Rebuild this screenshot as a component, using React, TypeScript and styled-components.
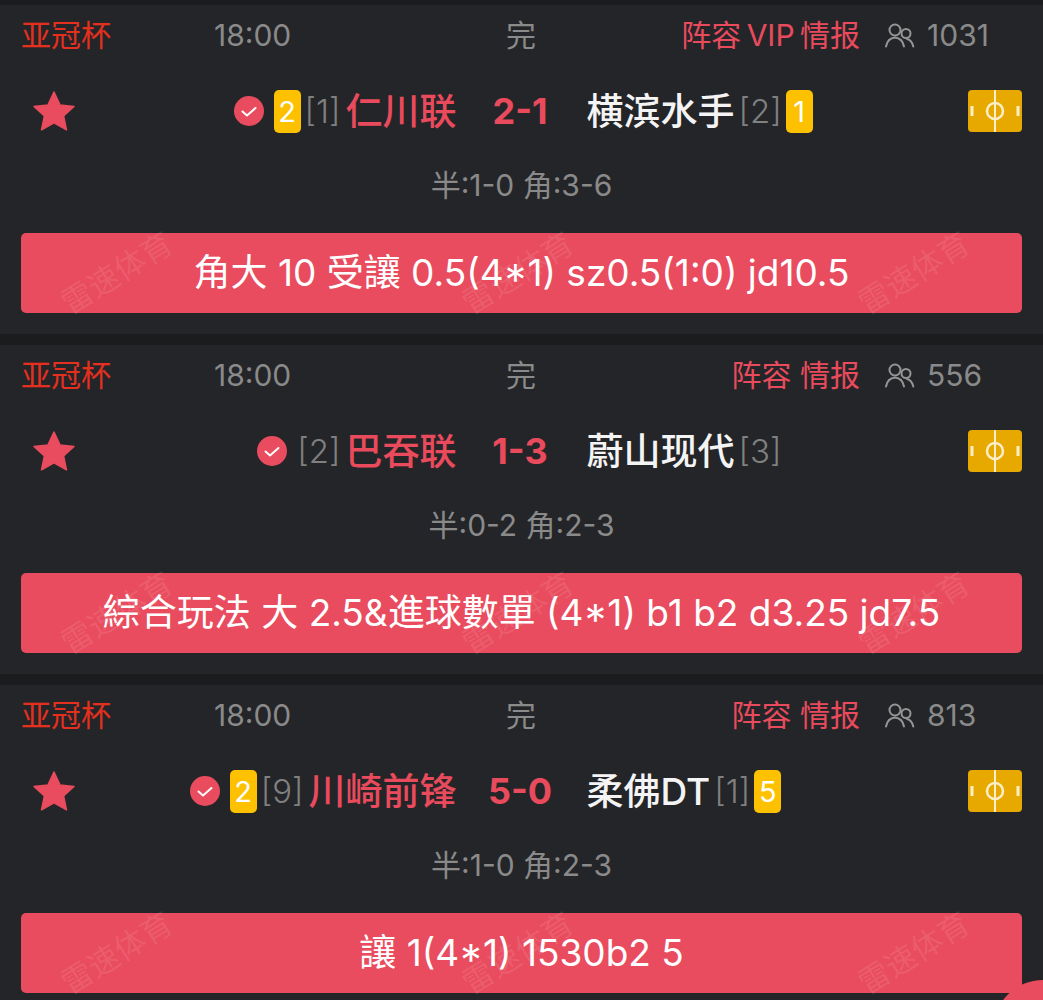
// Match list: finished games with a tip banner under each one

import React from 'react';
import styled, { createGlobalStyle } from 'styled-components';

const GlobalStyle = createGlobalStyle`
  html, body {
    margin: 0;
    height: 1000px;
    overflow: hidden;
    background: #1b1c1e;
  }
  body {
    font-family: "Inter", "Noto Sans CJK SC", sans-serif;
  }
`;

const Page = styled.div`
  display: flex;
  flex-direction: column;
  gap: 11px;
  padding-top: 5px;
`;

const Card = styled.section`
  height: 329px;
  box-sizing: border-box;
  background: #242528;
  padding: 0 21px;
  display: flex;
  flex-direction: column;
`;

const Header = styled.div`
  height: 60px;
  display: grid;
  grid-template-columns: 193px 292px 30px 1fr;
  align-items: center;
  font-size: 30px;
  color: #8a8a8a;
`;

const League = styled.span`
  color: #e5301f;
  padding-bottom: 5px;
`;

const Status = styled.span`
  text-align: center;
  white-space: nowrap;
  padding-bottom: 5px;
`;

const HeaderRight = styled.div`
  display: flex;
  align-items: center;
`;

const Links = styled.span<{ $tight: boolean }>`
  width: 324px;
  text-align: right;
  color: #e94b5d;
  white-space: nowrap;
  padding-bottom: 5px;
  word-spacing: ${(p) => (p.$tight ? '-3px' : '0')};
`;

const UsersSlot = styled.span`
  margin-left: 25px;
  display: flex;
`;

const Count = styled.span`
  margin-left: 12px;
`;

const MatchRow = styled.div`
  height: 92px;
  display: grid;
  grid-template-columns: 1fr 130px 1fr;
  align-items: center;
`;

const Side = styled.div`
  display: flex;
  align-items: center;
`;

const HomeName = styled.span`
  font-size: 37px;
  font-weight: 500;
  color: #e94b5d;
  white-space: nowrap;
  margin-left: 5px;
  padding-bottom: 5px;
`;

const AwayName = styled.span`
  font-size: 37px;
  font-weight: 500;
  color: #f4f4f4;
  white-space: nowrap;
  margin-right: 4px;
  padding-bottom: 5px;
`;

const Score = styled.div`
  text-align: center;
  font-size: 36px;
  font-weight: 700;
  color: #e94b5d;
  padding-right: 3px;
`;

const Rank = styled.span`
  font-size: 33px;
  font-weight: 300;
  color: #808080;
  white-space: nowrap;
  padding-bottom: 1px;
`;

const Badge = styled.span<{ $side: 'home' | 'away' }>`
  width: 27px;
  height: 43px;
  border-radius: 5px;
  background: #fdc100;
  color: #fff;
  font-size: 29px;
  display: flex;
  align-items: center;
  justify-content: center;
  margin-left: ${(p) => (p.$side === 'away' ? '4px' : '0')};
  margin-right: ${(p) => (p.$side === 'home' ? '4px' : '0')};
`;

const StarSlot = styled.span`
  margin-left: 12px;
  margin-right: auto;
  display: flex;
`;

const CheckSlot = styled.span`
  margin-right: 10px;
  display: flex;
`;

const PitchSlot = styled.span`
  margin-left: auto;
  display: flex;
`;

const HalfLine = styled.div`
  height: 56px;
  box-sizing: border-box;
  padding-bottom: 4px;
  display: flex;
  align-items: center;
  justify-content: center;
  font-size: 30px;
  color: #8a8a8a;
  white-space: nowrap;
`;

const TipBanner = styled.div`
  position: relative;
  margin-top: 20px;
  height: 80px;
  box-sizing: border-box;
  padding-bottom: 6px;
  border-radius: 5px;
  background: #e94c5e;
  color: #fff;
  font-size: 37px;
  display: flex;
  align-items: center;
  justify-content: center;
  white-space: nowrap;
`;

const Watermark = styled.span<{ $x: number }>`
  position: absolute;
  left: ${(p) => p.$x}px;
  top: 50%;
  font-size: 31px;
  line-height: 36px;
  color: rgba(255, 255, 255, 0.1);
  transform: translateY(-50%) rotate(-32deg);
  pointer-events: none;
`;

const CornerButton = styled.div`
  position: fixed;
  left: 993px;
  top: 980px;
  width: 100px;
  height: 100px;
  border-radius: 50%;
  background: #e94c5e;
`;

const StarIcon = () => (
  <svg width="42" height="40" viewBox="0 0 42 40">
    <path
      d="M21 1l6 12.9 14 1.6-10.4 9.5 2.9 13.8L21 31.8 8.5 38.8l2.9-13.8L1 15.5l14-1.6z"
      fill="#e94c5e"
      stroke="#e94c5e"
      strokeWidth="1.5"
      strokeLinejoin="round"
    />
  </svg>
);

const CheckIcon = () => (
  <svg width="30" height="30" viewBox="0 0 30 30">
    <circle cx="15" cy="15" r="15" fill="#e94c5e" />
    <path d="M8.5 15.5l4.5 4 8.5-7.5" fill="none" stroke="#fff" strokeWidth="2" strokeLinecap="round" strokeLinejoin="round" />
  </svg>
);

const UsersIcon = () => (
  <svg width="30" height="26" viewBox="0 0 30 26" fill="none" stroke="#959595" strokeWidth="2" strokeLinecap="round">
    <circle cx="10" cy="8" r="5.5" />
    <circle cx="21" cy="11.5" r="4.5" />
    <path d="M1 24.5C2 19 5 16 10 15.5c5 .5 8 3.5 9 9" />
    <path d="M22 17c3.5.8 5.5 3.7 6.3 7.5" />
  </svg>
);

const PitchIcon = () => (
  <svg width="54" height="42" viewBox="0 0 54 42">
    <rect width="54" height="42" rx="4" fill="#e7a900" />
    <path d="M27 0v42" stroke="#fbeec8" strokeWidth="2" />
    <circle cx="27" cy="21" r="8" fill="none" stroke="#fbeec8" strokeWidth="2.5" />
    <path d="M4 16v10M50 16v10" stroke="#fbeec8" strokeWidth="3" />
  </svg>
);

type Match = {
  links: string;
  count: number;
  home: string;
  homeRank: number;
  homeBadge?: number;
  away: string;
  awayRank: number;
  awayBadge?: number;
  score: string;
  half: string;
  tip: string;
};

const matches: Match[] = [
  {
    links: '阵容 VIP 情报',
    count: 1031,
    home: '仁川联',
    homeRank: 1,
    homeBadge: 2,
    away: '横滨水手',
    awayRank: 2,
    awayBadge: 1,
    score: '2-1',
    half: '半:1-0 角:3-6',
    tip: '角大 10 受讓 0.5(4*1) sz0.5(1:0) jd10.5',
  },
  {
    links: '阵容 情报',
    count: 556,
    home: '巴吞联',
    homeRank: 2,
    away: '蔚山现代',
    awayRank: 3,
    score: '1-3',
    half: '半:0-2 角:2-3',
    tip: '綜合玩法 大 2.5&進球數單 (4*1) b1 b2 d3.25 jd7.5',
  },
  {
    links: '阵容 情报',
    count: 813,
    home: '川崎前锋',
    homeRank: 9,
    homeBadge: 2,
    away: '柔佛DT',
    awayRank: 1,
    awayBadge: 5,
    score: '5-0',
    half: '半:1-0 角:2-3',
    tip: '讓 1(4*1) 1530b2 5',
  },
];

const MatchCard: React.FC<{ match: Match }> = ({ match }) => (
  <Card>
    <Header>
      <League>亚冠杯</League>
      <span>18:00</span>
      <Status>完</Status>
      <HeaderRight>
        <Links $tight={match.links.includes('VIP')}>{match.links}</Links>
        <UsersSlot>
          <UsersIcon />
        </UsersSlot>
        <Count>{match.count}</Count>
      </HeaderRight>
    </Header>
    <MatchRow>
      <Side>
        <StarSlot>
          <StarIcon />
        </StarSlot>
        <CheckSlot>
          <CheckIcon />
        </CheckSlot>
        {match.homeBadge !== undefined && <Badge $side="home">{match.homeBadge}</Badge>}
        <Rank>[{match.homeRank}]</Rank>
        <HomeName>{match.home}</HomeName>
      </Side>
      <Score>{match.score}</Score>
      <Side>
        <AwayName>{match.away}</AwayName>
        <Rank>[{match.awayRank}]</Rank>
        {match.awayBadge !== undefined && <Badge $side="away">{match.awayBadge}</Badge>}
        <PitchSlot>
          <PitchIcon />
        </PitchSlot>
      </Side>
    </MatchRow>
    <HalfLine>{match.half}</HalfLine>
    <TipBanner>
      {match.tip}
      <Watermark $x={34}>雷速体育</Watermark>
      <Watermark $x={435}>雷速体育</Watermark>
      <Watermark $x={831}>雷速体育</Watermark>
    </TipBanner>
  </Card>
);

export default function App() {
  return (
    <>
      <GlobalStyle />
      <Page>
        {matches.map((m) => (
          <MatchCard key={m.home} match={m} />
        ))}
      </Page>
      <CornerButton />
    </>
  );
}
